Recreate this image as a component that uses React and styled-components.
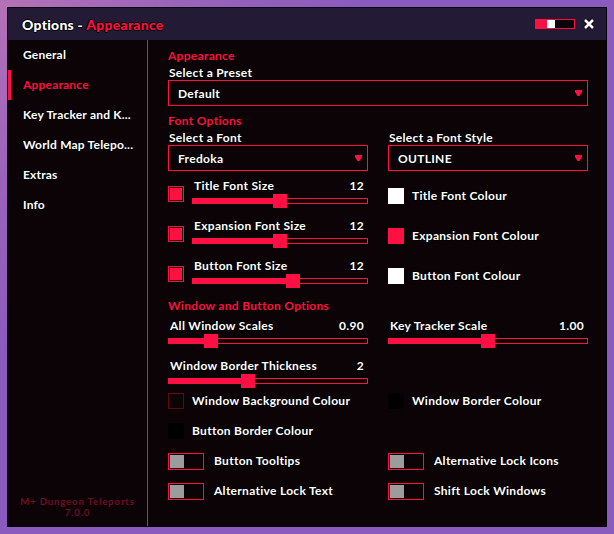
import styled, { createGlobalStyle } from "styled-components";

const RED = "#ff1042";
const PANEL = "#0b0306";

const GlobalStyle = createGlobalStyle`
  html, body {
    margin: 0;
    padding: 0;
  }
  body {
    width: 614px;
    height: 534px;
    overflow: hidden;
    background: radial-gradient(circle at 0 0, #b572b6 0%, #9a63bb 22%, #8a5abe 45%, #8a5bbf 100%);
    font-family: "Lato", "Open Sans", sans-serif;
  }
  * {
    box-sizing: border-box;
  }
`;

const outline = `
  text-shadow: -1px 0 0 #000, 1px 0 0 #000, 0 -1px 0 #000, 0 1px 0 #000;
`;

const Window = styled.div`
  margin: 7px;
  width: 600px;
  height: 520px;
  border: 1px solid #050108;
  background: ${PANEL};
  display: flex;
  flex-direction: column;
`;

const TitleBar = styled.div`
  height: 32px;
  flex-shrink: 0;
  background: #231a36;
  display: flex;
  align-items: center;
  padding: 0 11px 0 14px;
  gap: 8px;
`;

const Title = styled.div`
  flex: 1;
  font-size: 14px;
  font-weight: 900;
  letter-spacing: 0.25px;
  color: #fff;
  ${outline}

  & span {
    color: ${RED};
  }
`;

const MiniToggle = styled.div`
  width: 40px;
  height: 10px;
  border: 1px solid ${RED};
  background: ${PANEL};
  display: flex;
`;

const MiniFill = styled.div`
  width: 11px;
  background: ${RED};
`;

const MiniKnob = styled.div`
  width: 8px;
  background: #fff;
`;

const CloseIcon = styled.svg`
  width: 12px;
  height: 12px;
  display: block;
`;

const Body = styled.div`
  flex: 1;
  display: flex;
  min-height: 0;
`;

const Sidebar = styled.div`
  width: 140px;
  flex-shrink: 0;
  border-right: 1px solid ${RED};
  display: flex;
  flex-direction: column;
`;

const NavItem = styled.div`
  position: relative;
  height: 30px;
  line-height: 30px;
  padding-left: 15px;
  font-size: 12px;
  font-weight: 700;
  letter-spacing: 0.2px;
  color: ${(p) => (p.$active ? RED : "#fff")};
  white-space: nowrap;
  ${outline}

  &::before {
    content: "";
    display: ${(p) => (p.$active ? "block" : "none")};
    position: absolute;
    left: 0;
    top: 0;
    width: 3px;
    height: 30px;
    background: ${RED};
  }
`;

const Version = styled.div`
  margin-top: auto;
  padding-bottom: 8px;
  text-align: center;
  font-size: 9.5px;
  line-height: 10.5px;
  font-weight: 700;
  letter-spacing: 0.9px;
  color: #730c26;
`;

const Content = styled.div`
  flex: 1;
  padding: 8px 18px 0 20px;
  display: flex;
  flex-direction: column;
`;

const SectionTitle = styled.div`
  height: 16px;
  line-height: 16px;
  margin-top: ${(p) => p.$gap || 0}px;
  font-size: 12px;
  font-weight: 700;
  letter-spacing: 0.3px;
  color: ${RED};
  ${outline}
`;

const FieldLabel = styled.div`
  height: 15px;
  margin-top: 1px;
  line-height: 15px;
  padding-left: 1px;
  font-size: 12px;
  font-weight: 700;
  letter-spacing: 0.3px;
  color: #fff;
  ${outline}
`;

const Select = styled.div`
  height: 26px;
  border: 1px solid ${RED};
  background: ${PANEL};
  display: flex;
  align-items: center;
  justify-content: space-between;
  padding: 0 5px 0 9px;
  font-size: 12px;
  font-weight: 700;
  letter-spacing: 0.3px;
  color: #fff;
  ${outline}
`;

const Arrow = styled.svg`
  width: 7px;
  height: 6px;
  display: block;
`;

const Columns = styled.div`
  display: grid;
  grid-template-columns: 200px 200px;
  column-gap: 20px;
  row-gap: ${(p) => p.$rowGap || 0}px;
  margin-top: ${(p) => p.$gap || 0}px;
`;

const SizeRow = styled.div`
  height: 40px;
  display: flex;
  gap: 8px;
`;

const CheckBox = styled.div`
  width: 16px;
  height: 16px;
  margin-top: 8px;
  flex-shrink: 0;
  border: 1px solid ${RED};
  padding: 1px;

  &::after {
    content: "";
    display: block;
    width: 100%;
    height: 100%;
    background: ${RED};
  }
`;

const SliderBox = styled.div`
  flex: 1;
  padding-top: 1px;
  display: flex;
  flex-direction: column;
  gap: 1px;
`;

const SliderHead = styled.div`
  height: 14px;
  line-height: 14px;
  display: flex;
  justify-content: space-between;
  padding: 0 4px 0 2px;
  font-size: 12px;
  font-weight: 700;
  letter-spacing: 0.3px;
  color: #fff;
  ${outline}
`;

const TrackArea = styled.div`
  height: 14px;
  display: flex;
  align-items: center;
`;

const Track = styled.div`
  position: relative;
  width: 100%;
  height: 6px;
  border: 1px solid ${RED};
  background: ${PANEL};
`;

const Fill = styled.div`
  position: absolute;
  left: -1px;
  top: -1px;
  bottom: -1px;
  background: ${RED};
`;

const Thumb = styled.div`
  position: absolute;
  top: -5px;
  width: 14px;
  height: 14px;
  background: ${RED};
`;

const Slider = ({ label, value, fraction }) => (
  <SliderBox>
    <SliderHead>
      <span>{label}</span>
      <span>{value}</span>
    </SliderHead>
    <TrackArea>
      <Track>
        <Fill style={{ width: `calc(${fraction} * (100% - 14px) + 8px)` }} />
        <Thumb style={{ left: `calc(${fraction} * (100% - 14px))` }} />
      </Track>
    </TrackArea>
  </SliderBox>
);

const SwatchRow = styled.div`
  height: ${(p) => p.$height}px;
  padding-top: ${(p) => p.$top || 0}px;
  display: flex;
  align-items: ${(p) => (p.$top ? "flex-start" : "center")};
  gap: ${(p) => p.$gap || 8}px;
`;

const Swatch = styled.div`
  width: 16px;
  height: 16px;
  flex-shrink: 0;
  background: ${(p) => p.$color};
  border: 1px solid ${(p) => p.$border || p.$color};
`;

const RowLabel = styled.div`
  line-height: 16px;
  font-size: 12px;
  font-weight: 700;
  letter-spacing: 0.3px;
  color: #fff;
  white-space: nowrap;
  ${outline}
`;

const Toggle = styled.div`
  width: 36px;
  height: 17px;
  flex-shrink: 0;
  border: 1px solid ${RED};
  padding: 1px;
  display: flex;
`;

const Knob = styled.div`
  width: 14px;
  height: 13px;
  background: #9c9c9c;
`;

const navItems = [
  "General",
  "Appearance",
  "Key Tracker and K...",
  "World Map Telepo...",
  "Extras",
  "Info",
];

const DropArrow = () => (
  <Arrow viewBox="0 0 7 6">
    <polygon points="0,0 7,0 7,2 4.5,6 2.5,6 0,2" fill={RED} />
  </Arrow>
);

const ToggleRow = ({ label }) => (
  <SwatchRow $height={30} $gap={10}>
    <Toggle>
      <Knob />
    </Toggle>
    <RowLabel>{label}</RowLabel>
  </SwatchRow>
);

export default function App() {
  return (
    <>
      <GlobalStyle />
      <Window>
        <TitleBar>
          <Title>
            Options - <span>Appearance</span>
          </Title>
          <MiniToggle>
            <MiniFill />
            <MiniKnob />
          </MiniToggle>
          <CloseIcon viewBox="0 0 12 12">
            <path d="M2 2 L10 10 M10 2 L2 10" stroke="#000" strokeWidth="4.5" />
            <path d="M2 2 L10 10 M10 2 L2 10" stroke="#fff" strokeWidth="2.6" />
          </CloseIcon>
        </TitleBar>
        <Body>
          <Sidebar>
            {navItems.map((item) => (
              <NavItem key={item} $active={item === "Appearance"}>
                {item}
              </NavItem>
            ))}
            <Version>
              M+ Dungeon Teleports
              <br />
              7.0.0
            </Version>
          </Sidebar>
          <Content>
            <SectionTitle>Appearance</SectionTitle>
            <FieldLabel>Select a Preset</FieldLabel>
            <Select>
              Default
              <DropArrow />
            </Select>

            <SectionTitle $gap={7}>Font Options</SectionTitle>
            <Columns>
              <FieldLabel>Select a Font</FieldLabel>
              <FieldLabel>Select a Font Style</FieldLabel>
              <Select>
                Fredoka
                <DropArrow />
              </Select>
              <Select>
                OUTLINE
                <DropArrow />
              </Select>
            </Columns>

            <Columns $gap={7}>
              <SizeRow>
                <CheckBox />
                <Slider label="Title Font Size" value="12" fraction={0.5} />
              </SizeRow>
              <SwatchRow $height={40} $top={10}>
                <Swatch $color="#fff" />
                <RowLabel>Title Font Colour</RowLabel>
              </SwatchRow>
              <SizeRow>
                <CheckBox />
                <Slider label="Expansion Font Size" value="12" fraction={0.5} />
              </SizeRow>
              <SwatchRow $height={40} $top={10}>
                <Swatch $color={RED} />
                <RowLabel>Expansion Font Colour</RowLabel>
              </SwatchRow>
              <SizeRow>
                <CheckBox />
                <Slider label="Button Font Size" value="12" fraction={0.58} />
              </SizeRow>
              <SwatchRow $height={40} $top={10}>
                <Swatch $color="#fff" />
                <RowLabel>Button Font Colour</RowLabel>
              </SwatchRow>
            </Columns>

            <SectionTitle>Window and Button Options</SectionTitle>
            <Columns $gap={4} $rowGap={10}>
              <Slider label="All Window Scales" value="0.90" fraction={0.19} />
              <Slider label="Key Tracker Scale" value="1.00" fraction={0.5} />
              <Slider label="Window Border Thickness" value="2" fraction={0.39} />
              <div />
            </Columns>

            <Columns $gap={-2}>
              <SwatchRow $height={30}>
                <Swatch $color={PANEL} $border="#5e0818" />
                <RowLabel>Window Background Colour</RowLabel>
              </SwatchRow>
              <SwatchRow $height={30}>
                <Swatch $color="#000" />
                <RowLabel>Window Border Colour</RowLabel>
              </SwatchRow>
              <SwatchRow $height={30}>
                <Swatch $color="#000" />
                <RowLabel>Button Border Colour</RowLabel>
              </SwatchRow>
              <div />
              <ToggleRow label="Button Tooltips" />
              <ToggleRow label="Alternative Lock Icons" />
              <ToggleRow label="Alternative Lock Text" />
              <ToggleRow label="Shift Lock Windows" />
            </Columns>
          </Content>
        </Body>
      </Window>
    </>
  );
}
